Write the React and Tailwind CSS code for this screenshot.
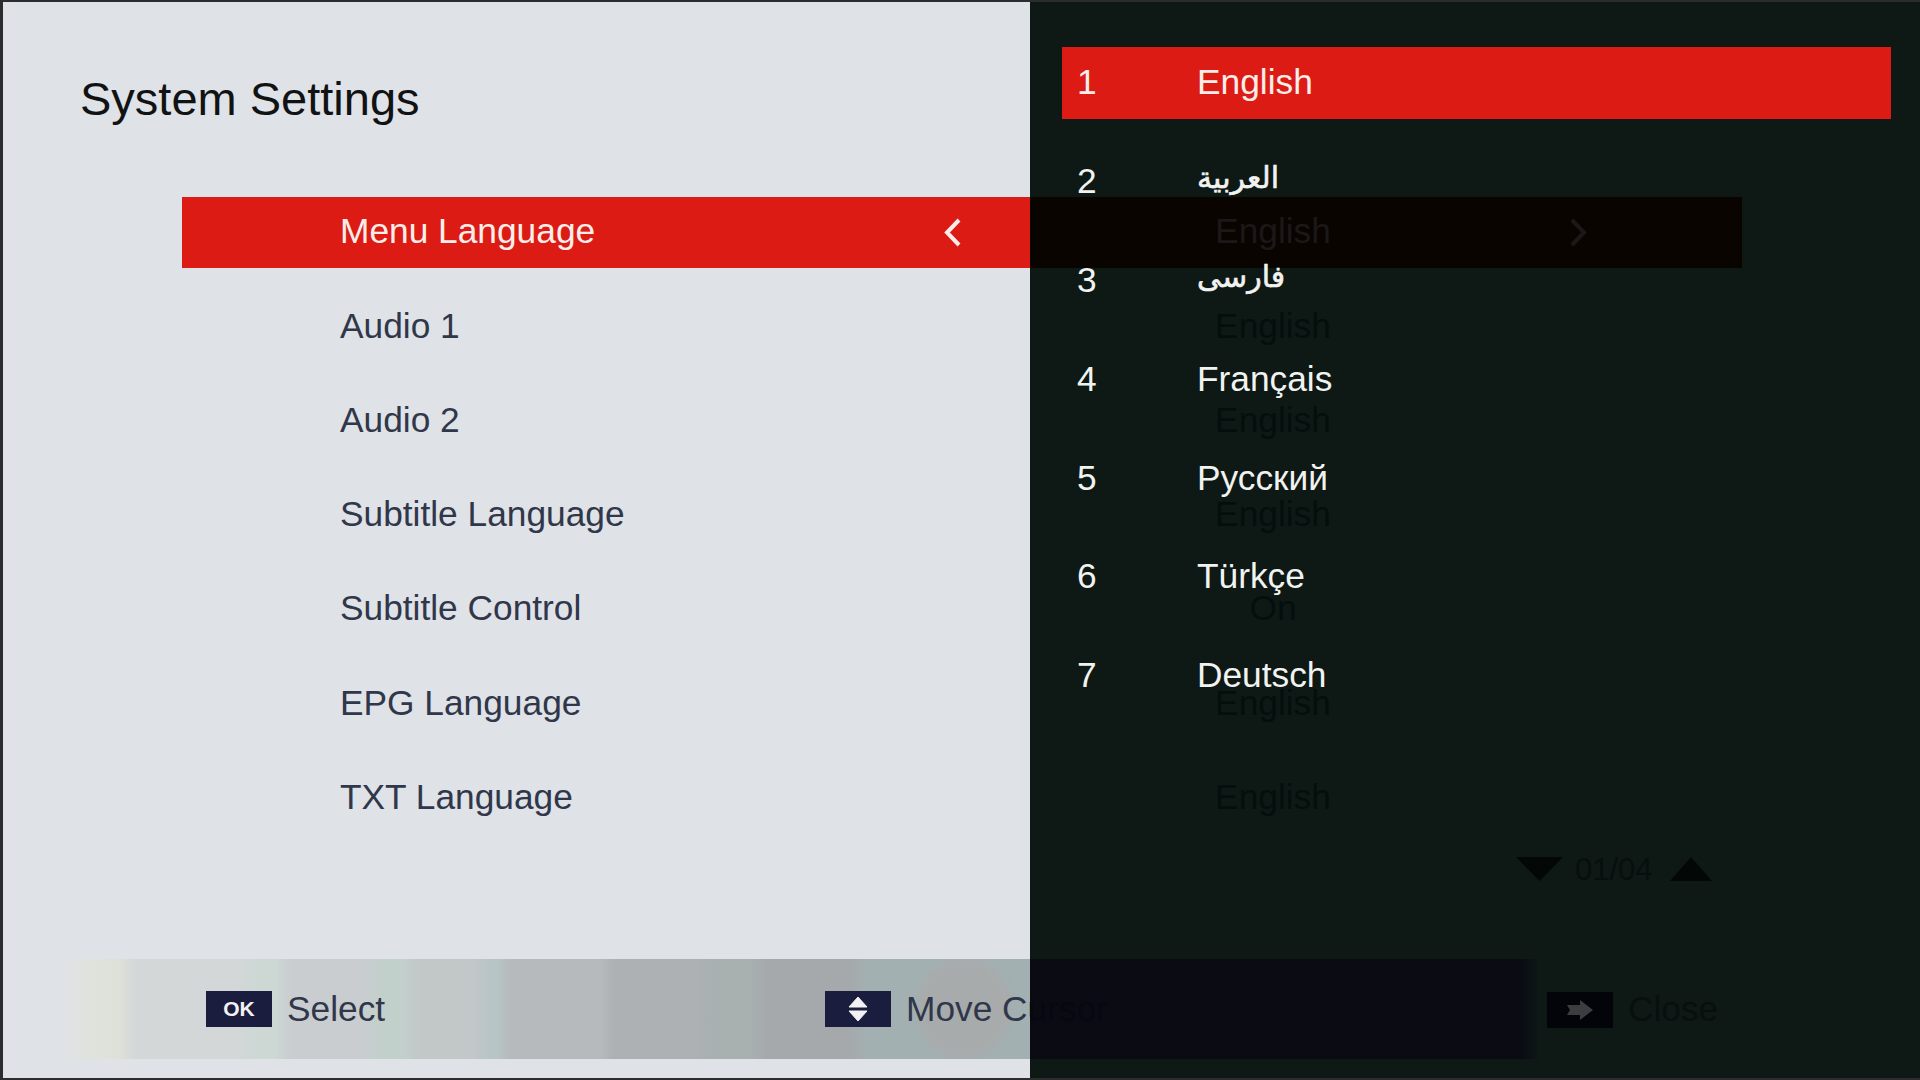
import React from 'react'

const rows = [
  { label: 'Audio 1', value: 'English' },
  { label: 'Audio 2', value: 'English' },
  { label: 'Subtitle Language', value: 'English' },
  { label: 'Subtitle Control', value: 'On' },
  { label: 'EPG Language', value: 'English' },
  { label: 'TXT Language', value: 'English' },
]

const languages = [
  { name: 'العربية', className: 'text-[30px] pb-[6px] [-webkit-text-stroke:0.6px_#f1f3f1]' },
  { name: 'فارسی', className: 'text-[30px] pb-[6px] [-webkit-text-stroke:0.6px_#f1f3f1]' },
  { name: 'Français', className: '' },
  { name: 'Русский', className: '' },
  { name: 'Türkçe', className: '' },
  { name: 'Deutsch', className: '' },
]

const Chevron = ({ dir, color }) => (
  <svg width="22" height="31" viewBox="0 0 22 31" fill="none">
    <polyline
      points={dir === 'left' ? '17,3 5,15.5 17,28' : '5,3 17,15.5 5,28'}
      stroke={color}
      strokeWidth="4"
    />
  </svg>
)

const App = () => {
  return (
    <div className="relative w-[1920px] h-[1080px] overflow-hidden bg-[#dfe2e6] border-l-[3px] border-t-2 border-b-2 border-[#2a2c2e] font-['Liberation_Sans','DejaVu_Sans',sans-serif] text-[35.3px] leading-none text-[#30374a]">
      {/* settings page underneath */}
      <h1 className="pl-[77px] pt-[74px] mb-[75px] h-[120px] text-[47px] leading-[46px] text-[#111214]">System Settings</h1>

      <div className="flex flex-col gap-[23.29px]">
        <div className="ml-[179px] w-[848px] h-[71px] pl-[158px] pb-[3px] flex items-center bg-[#dc1b14] text-[#fbeeea]">
          <span className="w-[602px]">Menu Language</span>
          <span className="pt-[3px] flex">
            <Chevron dir="left" color="#fbeeea" />
          </span>
        </div>
        {rows.map((row) => (
          <div key={row.label} className="ml-[179px] w-[1560px] h-[71px] pl-[158px] pb-[3px] flex items-center">
            <span className="w-[780px]">{row.label}</span>
            <span className="w-[306px] text-center">{row.value}</span>
          </div>
        ))}
      </div>

      <div className="relative mt-[125px] ml-[61px] w-[1476px] h-[100px] overflow-hidden flex items-center pl-[142px] bg-[linear-gradient(90deg,#dfe2e6_0px,#dfe3dc_24px,#dde1d8_56px,#d3d7d8_72px,#d3d7d8_172px,#cdd8d4_192px,#cdd8d4_210px,#c9cdd0_228px,#c9cdd0_298px,#c2d0cb_316px,#c2d0cb_340px,#c2c7c8_356px,#c2c7c8_410px,#b8c5c7_424px,#b8c5c7_432px,#b6babc_446px,#b6babc_536px,#aeb1b4_550px,#aeb1b4_628px,#a8b0b0_646px,#a8b0b0_686px,#a6a9ab_704px,#a6a9ab_786px,#a2b0b2_804px,#a3b1b4_1456px,#dfe2e6_1476px)]">
        <div className="absolute left-[852px] top-0 w-[96px] h-[100px] rounded-full bg-[#a8abac] blur-[3px]"></div>
        <div className="relative w-[619px] flex items-center gap-[15px]">
          <div className="w-[66px] h-[36px] bg-[#1a1d3d] flex items-center justify-center text-[21px] font-bold text-[#f2f2f4]">OK</div>
          <span className="pb-[1px]">Select</span>
        </div>
        <div className="relative flex items-center gap-[15px]">
          <div className="w-[66px] h-[36px] bg-[#1a1d3d] flex items-center justify-center">
            <svg width="20" height="26" viewBox="0 0 20 26" fill="#f2f2f4">
              <path d="M10 1 L19 11 L1 11 Z" strokeLinejoin="round" stroke="#f2f2f4" strokeWidth="1" />
              <path d="M10 25 L19 15 L1 15 Z" strokeLinejoin="round" stroke="#f2f2f4" strokeWidth="1" />
            </svg>
          </div>
          <span className="pb-[1px] whitespace-nowrap">Move Cursor</span>
        </div>
      </div>

      {/* language popup, see-through so the page shows faintly */}
      <div className="absolute left-[1027px] right-0 top-[-2px] bottom-[-2px] bg-[rgba(2,13,10,0.95)]">
        <div className="absolute left-0 top-[197px] w-[712px] h-[71px] pb-[3px] flex items-center bg-[#0a0401] text-[#1c1719]">
          <span className="ml-[90px] w-[306px] text-center">English</span>
          <span className="ml-[141px] pt-[3px] flex">
            <Chevron dir="right" color="#1c1719" />
          </span>
        </div>

        <div className="absolute left-0 top-[959px] w-[510px] h-[100px] bg-[linear-gradient(90deg,rgba(10,0,20,0.5)_96%,transparent)]"></div>

        <div className="absolute left-[486px] top-[857px] h-[24px] flex items-center text-[31px] text-[#070f0e]">
          <svg width="47" height="24" viewBox="0 0 47 24" fill="#030807">
            <path d="M0 0 H47 L23.5 24 Z" />
          </svg>
          <span className="ml-[12px] mr-[17px]">01/04</span>
          <svg width="42" height="24" viewBox="0 0 42 24" fill="#030807">
            <path d="M0 24 H42 L21 0 Z" />
          </svg>
        </div>

        <div className="absolute left-[517px] top-[991px] flex items-center gap-[15px] text-[#080f0e]">
          <div className="w-[66px] h-[36px] bg-[#02040a] flex items-center justify-center">
            <svg width="26" height="20" viewBox="0 0 26 20" fill="#3b3d3e">
              <path d="M0 5 H13 V0 L26 10 L13 20 V15 H0 L3 10 Z" />
            </svg>
          </div>
          <span className="pb-[3px]">Close</span>
        </div>

        <div className="relative pt-[47px] pl-[32px] flex flex-col gap-[26.8px] text-[#f1f3f1]">
          <div className="w-[829px] h-[72px] pl-[15px] pb-[2px] flex items-center bg-[#dc1b14] text-[#fbeeea]">
            <span className="w-[120px]">1</span>
            <span>English</span>
          </div>
          {languages.map((lang, i) => (
            <div key={lang.name} className="w-[829px] h-[72px] pl-[15px] pb-[2px] flex items-center">
              <span className="w-[120px]">{i + 2}</span>
              <span className={lang.className}>{lang.name}</span>
            </div>
          ))}
        </div>
      </div>
    </div>
  )
}

export default App
